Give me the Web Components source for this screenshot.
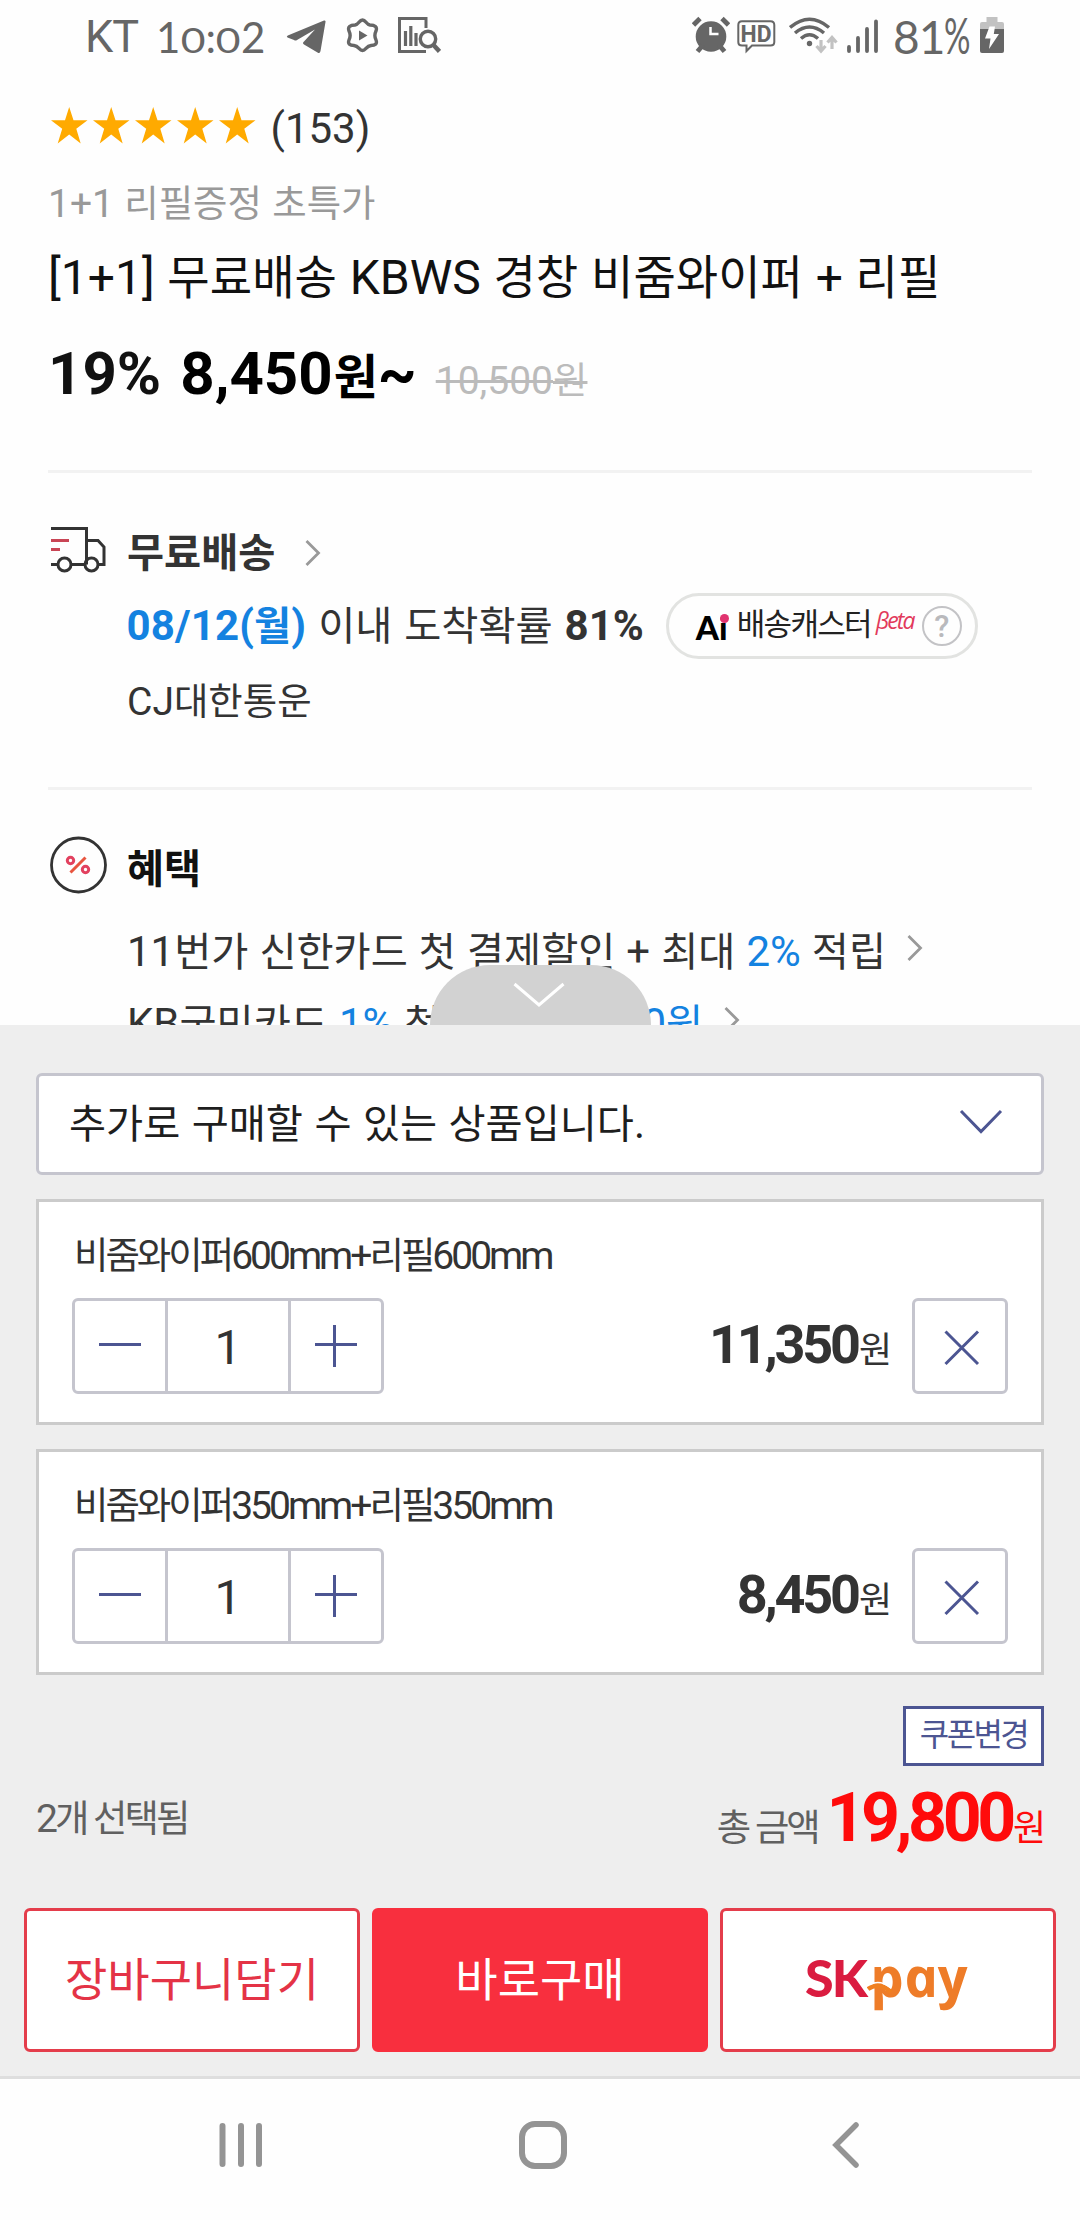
<!DOCTYPE html>
<html lang="ko">
<head>
<meta charset="utf-8">
<title>KBWS 비줌와이퍼</title>
<style>
html,body{margin:0;padding:0;background:#fefefe}
body{width:1080px;height:2220px;overflow:hidden;font-family:Roboto,"Noto Sans CJK KR",sans-serif;color:#333}
</style>
</head>
<body>
<product-page></product-page>
<script>
// Hangul runs are set slightly smaller than the Latin text beside them.
const K = s => s.replace(/[\u3131-\uD79D]+/g, m => `<span class="h">${m}</span>`);
const BASE = `
*{box-sizing:border-box}
:host{display:block}
.h{font-size:.96em;line-height:0}
.row{display:flex;height:60px;line-height:60px;white-space:pre}
svg{display:block;flex:none}
b{font-weight:700}
`;
function define(name, css, html){
  customElements.define(name, class extends HTMLElement{
    constructor(){
      super();
      this.attachShadow({mode:'open'});
    }
    connectedCallback(){
      const body = typeof html === 'function' ? html(this) : html;
      this.shadowRoot.innerHTML = `<style>${BASE}${css}</style>${body}`;
    }
  });
}

define('status-bar', `
:host{display:flex;height:78px;color:#666;font-family:Lato,Roboto,sans-serif;line-height:60px;white-space:pre}
.left,.right{display:flex;align-items:flex-start}
.left{padding-left:85px}
.right{margin-left:auto;padding-right:76px}
.kt{font:400 45px/74px Roboto,sans-serif;width:71px;letter-spacing:-1px}
.clock{font-size:42px;line-height:74px;width:130px;display:block}
.clock i{font-style:normal;display:inline-block;line-height:0}
.o{font-size:35px;transform:scaleX(1.22);margin:0 2.4px}
.pc{font:400 46px/74px Lato,sans-serif;width:77px;display:block;letter-spacing:-1px}
.pc i{font-style:normal;display:inline-block;line-height:0;font-size:50px;transform:scaleX(.66);transform-origin:0 50%}
`, `
<div class="left">
  <span class="kt">KT</span><span class="clock">1<i class="o">0</i>:<i class="o">0</i>2</span>
  <svg width="40" height="78" viewBox="0 0 40 78" fill="#666"><path d="M38 20.5Q40 20 39.5 22L34.5 51Q34 54 31.500 52.500L18 44.500Q16 43.300 18 41.500L29 29.500L11 40Q9.500 41 8 40L1.500 37.500Q0 36.500 1.800 35.500Z"/></svg>
  <svg style="margin-left:20px" width="33" height="78" viewBox="0 0 33 78"><path d="M16.500 20C20 20 20 24.500 24 25C29 25 31.500 27 30 31C28.500 34 28.500 37 30 40C31.500 44 29 45.500 25 45.500C20 46 20 50.500 16.500 50.500S13 46 8 45.500C4 45.500 1.500 44 3 40C4.500 37 4.500 34 3 31C1.500 27 4 25 9 25C13 24.500 13 20 16.500 20Z" fill="none" stroke="#666" stroke-width="3.400"/><path d="M13 30.500L21.500 35.500L13 40.500Z" fill="#666"/></svg>
  <svg style="margin-left:19px" width="43" height="78" viewBox="0 0 43 78" fill="none" stroke="#666" stroke-width="3"><path d="M28 28V18.500H1.500V51.500H28"/><path d="M7.500 46V31M12.800 46V26M18 46V33" stroke-width="3.200"/><circle cx="30" cy="39" r="7.700" stroke-width="3.400"/><path d="M35.500 45L41.500 51.500" stroke-width="4.500"/></svg>
</div>
<div class="right">
  <svg width="38" height="78" viewBox="0 0 38 78"><circle cx="19" cy="36.500" r="15.300" fill="#666"/><path d="M1.500 25L8 18.500M36.500 25L30 18.500M5.500 51.500L11 45M32.500 51.500L27 45" stroke="#666" stroke-width="4.800"/><path d="M18.500 27V34H26.500" fill="none" stroke="#fff" stroke-width="2.500"/></svg>
  <svg style="margin-left:7px" width="39" height="78" viewBox="0 0 39 78"><path d="M5 21.300H33.500Q37.300 21.300 37.300 25V42Q37.300 45.500 33.500 45.500H15L9.500 51V45.500H5Q1.300 45.500 1.300 42V25Q1.300 21.300 5 21.300Z" fill="none" stroke="#666" stroke-width="2"/><text x="3.500" y="41.500" textLength="31" lengthAdjust="spacingAndGlyphs" font-family="Roboto" font-weight="700" font-size="23" fill="#666">HD</text></svg>
  <svg style="margin-left:13px" width="49" height="78" viewBox="0 0 49 78" fill="none" stroke="#666" stroke-width="3.500"><path d="M1 27.500Q20.500 11 40 27.500M6 33Q20.500 21 35 33M12 38.500Q20.500 31 29 38.500"/><circle cx="20.500" cy="43.500" r="2.700" fill="#666" stroke="none"/><path d="M32 40V50M27.500 46L32 51L36.500 46M43 49V39M38.500 42.500L43 37.500L47.500 42.500" stroke="#c2c2c2" stroke-width="3.200"/></svg>
  <svg style="margin-left:9px" width="32" height="78" viewBox="0 0 32 78" stroke="#666" stroke-width="3.800" stroke-linecap="round"><path d="M2 47V51M11 38V51M20 29V51M29 21.500V51"/></svg>
  <span class="pc" style="margin-left:14px">81<i>%</i></span>
  <svg style="margin-left:10px" width="24" height="78" viewBox="0 0 24 78"><path d="M0 29V24Q0 22 2 22H6.500V17H17.500V22H22Q24 22 24 24V29Z" fill="#c2c2c2"/><path d="M0 29H24V51Q24 53 22 53H2Q0 53 0 51Z" fill="#666"/><path d="M9.500 26.500H15L13.800 34H19L9 49L10.500 38.500H5Z" fill="#fff"/></svg>
</div>`);

define('star-rating', `
:host{display:flex;gap:5.500px}
`, el => Array.from({length:+el.getAttribute('value')}, () =>
  `<svg width="36.500" height="37" viewBox="0 0 36.500 37"><path d="M18.200 0L22.500 13.300H36.500L25.300 21.800L29.700 36.500L18.200 27.500L6.700 36.500L11.200 21.800L0 13.300H14Z" fill="#fa0"/></svg>`).join(''));

define('chevron-right', `:host{display:flex;align-items:center}`,
  `<svg width="16" height="26" viewBox="0 0 16 26"><path d="M1.500 1L13.500 13L1.500 25" fill="none" stroke="#999" stroke-width="2.800"/></svg>`);

define('product-summary', `
:host{padding:0 48px}
.rate{margin-top:21px;font-size:42px;padding-left:3px}
star-rating{margin-top:8px;margin-right:15px}
.sub{margin-top:15px;font-size:39px;color:#999;word-spacing:.6px}
.title{margin-top:14px;font-size:48px;color:#111;word-spacing:.8px}
.price{margin-top:36px;font-size:60px;font-weight:700;color:#000}
.price .pct{color:#111;margin-right:19px}
.won{font-size:48px;line-height:0;margin-left:1px}
.old{font-size:39px;font-weight:400;color:#bbb;margin-left:19px;text-decoration:line-through}
.line{height:3px;background:#f2f2f2;margin-top:66px}
`, `
<div class="row rate"><star-rating value="5"></star-rating><span>(153)</span></div>
<div class="row sub"><span>${K('1+1 리필증정 초특가')}</span></div>
<div class="row title"><span>${K('[1+1] 무료배송 KBWS 경창 비줌와이퍼 + 리필')}</span></div>
<div class="row price"><div><span class="pct">19%</span><span>8,450</span><span class="won">원</span><span>~</span><span class="old">${K('10,500원')}</span></div></div>
<div class="line"></div>`);

define('ai-badge', `
:host{display:flex;width:312px;height:66px;border:3px solid #e2e3e1;border-radius:33px;padding-left:27px;line-height:60px;color:#222;white-space:pre}
.ai{position:relative;font:900 33px/62px Lato,sans-serif;color:#000;width:41px}
.dot{position:absolute;left:24.500px;top:17.500px;width:9px;height:9px;border-radius:50%;background:#e0336f}
.name{font-size:31px;width:139px;letter-spacing:-1.700px;line-height:58px}
.beta{font:italic 500 23px/48px "Open Sans",sans-serif;color:#e23a5c;width:39px;letter-spacing:-1.900px}
.q{width:40px;height:40px;border:2px solid #c3c3c6;border-radius:50%;margin:10px 0 0 7px;font:500 31px/37px Roboto,sans-serif;text-align:center;color:#b9b9bc}
`, `<span class="ai">Ai<span class="dot"></span></span><span class="name">배송캐스터</span><span class="beta">βeta</span><span class="q">?</span>`);

define('delivery-info', `
:host{padding:0 48px;font-size:42px}
.head{margin-top:50px;font-weight:700}
.head svg{margin:3px 21px 0 3px}
.head chevron-right{margin-left:30px}
.eta{margin-top:13px;padding-left:78.500px;word-spacing:1.500px}
.eta .date{color:#1482e0;font-weight:700;letter-spacing:.15px}
ai-badge{margin:-3px 0 0 22px}
.co{margin-top:16px;padding-left:79px;font-size:39px}
.line{height:3px;background:#f2f2f2;margin-top:55px}
`, `
<div class="row head">
<svg width="55" height="48" viewBox="0 0 55 48" fill="none" stroke="#333" stroke-width="3"><path d="M0 2.500H35.500V38.500M35.500 14.500H47L53 21V38.500H48M0 38.500H6M21 38.500H33"/><circle cx="13.500" cy="38.500" r="6.500"/><circle cx="40.500" cy="38.500" r="6.500"/><path d="M0 14.500H18M0 23.500H9" stroke="#c94555"/></svg><span>${K('무료배송')}</span><chevron-right></chevron-right></div>
<div class="row eta"><span class="date">${K('08/12(월)')}</span><span>${K(' 이내 도착확률 ')}</span><b>81%</b><ai-badge></ai-badge></div>
<div class="row co"><span>${K('CJ대한통운')}</span></div>
<div class="line"></div>`);

define('benefit-info', `
:host{padding:0 48px;font-size:42px;word-spacing:.6px}
.head{margin-top:49px;font-weight:700;color:#111}
.head svg{margin:-4px 19px 0 2px}
.a{margin-top:23px;padding-left:79px}
.b{margin-top:12px;padding-left:79px}
.blue{color:#1482e0}
chevron-right{margin-left:21px;margin-top:-9px}
.gap{width:201px}
`, `
<div class="row head"><svg width="58" height="60" viewBox="0 0 58 60" fill="none"><circle cx="28.500" cy="30" r="27" stroke="#333" stroke-width="2.800"/><g stroke="#e2415f" stroke-width="3"><circle cx="20.500" cy="25.500" r="3.200"/><circle cx="35.500" cy="34.500" r="3.200"/><path d="M20.500 37.500L35.500 22.500" stroke="#e8553f"/></g></svg><span>${K('혜택')}</span></div>
<div class="row a"><span>${K('11번가 신한카드 첫 결제할인 + 최대 ')}<span class="blue">2%</span>${K(' 적립')}</span><chevron-right></chevron-right></div>
<div class="row b"><span>${K('KB국민카드 ')}<span class="blue">1%</span>${K(' 첫')}</span><span class="gap"></span><span class="blue">${K('0원')}</span><chevron-right></chevron-right></div>`);

define('qty-stepper', `
:host{display:flex;width:312px;height:96px;border:3px solid #c5c5ce;border-radius:6px;font-size:48px;line-height:93px}
.num{flex:1;text-align:center;border:solid #c5c5ce;border-width:0 3px}
.minus{width:90px}.plus{width:90px}
path{stroke:#4c5592;stroke-width:3}
`, `<svg class="minus" width="90" height="90" viewBox="0 0 90 90"><path d="M24 43.500H66"/></svg><span class="num"><slot></slot></span><svg class="plus" width="90" height="90" viewBox="0 0 90 90"><path d="M24 43.500H66M43.500 24V66"/></svg>`);

define('option-card', `
:host{height:226px;border:3px solid #cbcbcb;background:#fff;padding:24px 33px 0}
.name{font-size:39px;letter-spacing:-3px;padding-left:2px}
.ctl{display:flex;margin-top:12px}
.amt{margin-left:auto;display:block;line-height:93px;font-size:54px;font-weight:700;letter-spacing:-3.200px;white-space:pre}
.won{font-size:36px;font-weight:400;line-height:0;letter-spacing:0;margin-left:1px}
.del{width:96px;height:96px;border:3px solid #c5c5ce;border-radius:6px;margin-left:20px}
`, el => `
<div class="row name"><span>${K(el.getAttribute('name'))}</span></div>
<div class="ctl"><qty-stepper>1</qty-stepper><span class="amt">${el.getAttribute('amount')}<span class="won">원</span></span>
<div class="del"><svg width="90" height="90" viewBox="0 0 90 90"><path d="M30.500 30.500L63 63M63 30.500L30.500 63" stroke="#4c5592" stroke-width="3"/></svg></div></div>`);

define('action-button', `
:host{display:flex;justify-content:center;width:336px;height:144px;border:3px solid #e43d4b;border-radius:6px;background:#fff;color:#e43346;font-size:46px;line-height:138px;white-space:pre}
:host([primary]){background:#f82f3e;border-color:#f82f3e;color:#fff}
`, `<slot></slot>`);

define('skpay-logo', `
:host{display:flex;position:relative;width:166px;height:60px;margin-top:36px;line-height:60px}
.sk{font:900 52px/60px Lato,sans-serif;color:#da1c40;letter-spacing:-2px;width:68px}
.pay{font:italic 700 55px/57px "Open Sans",sans-serif;color:#ee7c28;transform:scaleX(1.04) skewX(12deg);transform-origin:0 48px;width:96px;letter-spacing:0}
svg{position:absolute;left:62px;top:34px}
`, `<span class="sk">SK</span><span class="pay">pay</span><svg width="30" height="16" viewBox="0 0 30 16"><path d="M1 8Q12 0 24 11" fill="none" stroke="#f08020" stroke-width="4.500"/><path d="M3 3.500Q13 -2 24 7" fill="none" stroke="#fff" stroke-width="1.500"/></svg>`);

define('purchase-sheet', `
:host{position:relative;height:1051px;background:#eee;padding:48px 36px 0}
.handle{position:absolute;left:430px;top:-60px;width:221px;height:60px;border-radius:60px 60px 0 0;background:#d2d2d2;display:flex;justify-content:center}
.handle svg{margin:17px 3px 0 0}
.select{display:flex;justify-content:space-between;height:102px;border:3px solid #c5c5ce;border-radius:6px;background:#fff;font-size:42px;line-height:95px;padding:0 38px 0 30px;color:#1e1e1e;white-space:pre;word-spacing:1px}
.select svg{margin-top:33px}
option-card{margin-top:24px}
.coupon{width:141px;height:60px;margin:31px 0 0 auto;border:3px solid #4c5592;background:#fff;color:#4c5592;text-align:center;font-size:32px;line-height:52px;letter-spacing:-2.600px}
.total{display:flex;justify-content:space-between;height:142px;line-height:60px;font-size:39px;letter-spacing:-3px;color:#606060;white-space:pre}
.cnt{margin-top:23px}
.sum{margin:32px -2px 0 0}
.big{font-size:68px;line-height:0;font-weight:700;color:#ff0b0b;letter-spacing:-4.400px;margin-left:2px}
.won{font-size:36px;line-height:0;color:#ff0b0b;letter-spacing:0;margin-left:1px}
.acts{display:flex;gap:12px;margin:0 -12px}
`, `
<div class="handle"><svg width="52" height="26" viewBox="0 0 52 26"><path d="M1.500 2L26 23L50.500 2" fill="none" stroke="#fff" stroke-width="3"/></svg></div>
<div class="select"><span>${K('추가로 구매할 수 있는 상품입니다.')}</span><svg width="44" height="28" viewBox="0 0 44 28"><path d="M2 2L22 22.500L42 2" fill="none" stroke="#4c5592" stroke-width="3"/></svg></div>
<option-card name="비줌와이퍼600mm+리필600mm" amount="11,350"></option-card>
<option-card name="비줌와이퍼350mm+리필350mm" amount="8,450"></option-card>
<div class="coupon">쿠폰변경</div>
<div class="total"><span class="cnt">${K('2개 선택됨')}</span><span class="sum">${K('총 금액 ')}<span class="big">19,800</span><span class="won">원</span></span></div>
<div class="acts"><action-button>장바구니담기</action-button><action-button primary>바로구매</action-button><action-button><skpay-logo></skpay-logo></action-button></div>`);

define('nav-bar', `
:host{display:flex;height:144px;border-top:3px solid #dedede;background:#fefefe}
svg{margin-top:40px}
`, `
<svg style="margin-left:219px" width="44" height="52" viewBox="0 0 44 52"><path d="M3.500 7V45M22 7V45M40 7V45" stroke="#949494" stroke-width="6" stroke-linecap="round"/></svg>
<svg style="margin-left:255px" width="50" height="52" viewBox="0 0 50 52"><rect x="4" y="5" width="42" height="42" rx="13" fill="none" stroke="#949494" stroke-width="6"/></svg>
<svg style="margin-left:263px" width="30" height="52" viewBox="0 0 30 52"><path d="M25 6L5 26L25 46" fill="none" stroke="#949494" stroke-width="5.500" stroke-linecap="round"/></svg>`);

define('product-page', `
:host{width:1080px;height:2220px;overflow:hidden}
.top{height:1025px;overflow:hidden}
`, `
<div class="top"><status-bar></status-bar><product-summary></product-summary><delivery-info></delivery-info><benefit-info></benefit-info></div>
<purchase-sheet></purchase-sheet>
<nav-bar></nav-bar>`);
</script>
</body>
</html>
